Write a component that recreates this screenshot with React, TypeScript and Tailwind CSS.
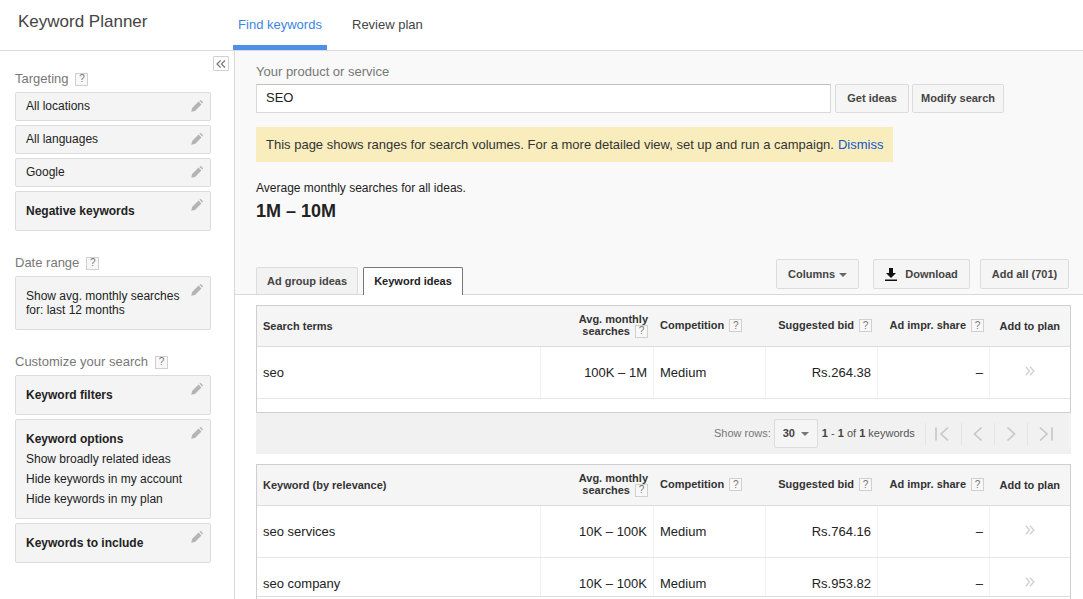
import type { ReactNode } from "react";

function Help() {
  return (
    <span className="inline-flex h-[13px] w-[13px] items-center justify-center border border-[#d0d0d0] bg-[#f8f8f8] text-[10px] font-normal leading-none text-[#777]">?</span>
  );
}

function PencilIcon() {
  return (
    <svg viewBox="0 0 14 14" className="absolute right-[7px] top-[7px] h-[12px] w-[12px]">
      <path d="M0.3 13.7 L1.3 9.3 L8.8 1.8 L12.2 5.2 L4.7 12.7 Z M9.8 0.8 L10.6 0.2 Q11.2 -0.1 11.8 0.3 L13.7 2.2 Q14.1 2.8 13.8 3.4 L13.2 4.2 Z" fill="#b4b4b4" />
    </svg>
  );
}

function Card({ className, children }: { className: string; children: ReactNode }) {
  return (
    <div className={"relative rounded-[2px] border border-[#dcdcdc] bg-[#f4f4f4] pl-[10px] text-[12px] text-[#222] " + className}>
      {children}
      <PencilIcon />
    </div>
  );
}

function SideLabel({ text, className }: { text: string; className: string }) {
  return (
    <div className={"flex items-center gap-[7px] text-[13px] text-[#777] " + className}>
      {text}
      <Help />
    </div>
  );
}

function Btn({ className, children }: { className: string; children: ReactNode }) {
  return (
    <button className={"flex h-[29px] items-center justify-center rounded-[2px] border border-[#dcdcdc] bg-[#f5f5f5] text-[11px] font-bold text-[#444] " + className}>
      {children}
    </button>
  );
}

function TableHead({ title }: { title: string }) {
  return (
    <div className="flex h-[41px] border-b border-[#dcdcdc] bg-[#f5f5f5] text-[11px] font-bold text-[#333]">
      <div className="flex w-[283px] items-center pl-[6px]">{title}</div>
      <div className="flex w-[113px] flex-col items-end justify-center pb-[2px] pr-[5px] leading-[12px]">
        <span>Avg. monthly</span>
        <span className="flex items-center gap-[5px]">searches <Help /></span>
      </div>
      <div className="flex w-[112px] items-center gap-[5px] pl-[7px] pb-[1px]">Competition <Help /></div>
      <div className="flex w-[112px] items-center justify-end gap-[5px] pr-[5px] pb-[1px]">Suggested bid <Help /></div>
      <div className="flex w-[112px] items-center justify-end gap-[5px] pr-[5px] pb-[1px]">Ad impr. share <Help /></div>
      <div className="flex flex-1 items-center justify-end pr-[10px]">Add to plan</div>
    </div>
  );
}

function Row({ term, vol, bid, height }: { term: string; vol: string; bid: string; height: string }) {
  return (
    <div className={"flex overflow-hidden border-b text-[13px] text-[#222] " + height}>
      <div className="flex h-[51px] w-[284px] shrink-0 items-center border-r border-[#f1f1f1] pl-[6px]">{term}</div>
      <div className="flex h-[51px] w-[113px] shrink-0 items-center justify-end border-r border-[#f1f1f1] pr-[6px]">{vol}</div>
      <div className="flex h-[51px] w-[112px] shrink-0 items-center border-r border-[#f1f1f1] pl-[6px]">Medium</div>
      <div className="flex h-[51px] w-[112px] shrink-0 items-center justify-end border-r border-[#f1f1f1] pr-[6px]">{bid}</div>
      <div className="flex h-[51px] w-[112px] shrink-0 items-center justify-end border-r border-[#f1f1f1] pr-[6px]">–</div>
      <div className="flex h-[51px] flex-1 items-center justify-center pb-[3px]">
        <svg viewBox="0 0 10 10" className="h-[10px] w-[10px]" fill="none" stroke="#cfcfcf" strokeWidth="1.3">
          <path d="M0.8 0.8 L4.6 5 L0.8 9.2 M5 0.8 L8.8 5 L5 9.2" />
        </svg>
      </div>
    </div>
  );
}

function PageIcon({ d, w }: { d: string; w: string }) {
  return (
    <div className={"flex h-[22px] items-center justify-center border-l border-[#e4e4e4] " + w}>
      <svg viewBox="0 0 16 16" className="h-[16px] w-[16px]" fill="none" stroke="#c8c8c8" strokeWidth="1.7">
        <path d={d} />
      </svg>
    </div>
  );
}

export default function App() {
  return (
    <div className="flex h-[599px] w-[1083px] flex-col overflow-hidden bg-white font-['Liberation_Sans',Arial,sans-serif]">
      {/* Top bar */}
      <header className="flex h-[51px] shrink-0 border-b border-[#d9d9d9]">
        <div className="w-[233px] pl-[18px] pt-[11px] text-[17px] leading-[22px] text-[#444]">Keyword Planner</div>
        <div className="flex h-[50px] w-[94px] items-start justify-center border-b-[5px] border-[#4d90e5] pt-[15px] text-[13px] text-[#3b86e0]">Find keywords</div>
        <div className="pl-[25px] pt-[15px] text-[13px] text-[#444]">Review plan</div>
      </header>

      <div className="flex min-h-0 flex-1">
        {/* Sidebar */}
        <aside className="relative w-[235px] shrink-0 border-r border-[#d9d9d9] pl-[15px] pr-[23px]">
          <button className="absolute right-[5px] top-[5px] flex h-[15px] w-[16px] items-center justify-center rounded-[1px] border border-[#d0d0d0] bg-white">
            <svg viewBox="0 0 10 8" className="h-[8px] w-[10px]" fill="none" stroke="#777" strokeWidth="1.2">
              <path d="M4.6 0.5 L1 4 L4.6 7.5 M9 0.5 L5.4 4 L9 7.5" />
            </svg>
          </button>
          <SideLabel text="Targeting" className="mt-[20px] h-[16px]" />
          <div className="mt-[5px] flex flex-col gap-[4px]">
            <Card className="flex h-[29px] items-center pb-[1px]">All locations</Card>
            <Card className="flex h-[29px] items-center pb-[1px]">All languages</Card>
            <Card className="flex h-[29px] items-center pb-[1px]">Google</Card>
            <Card className="flex h-[40px] items-center font-bold">Negative keywords</Card>
          </div>
          <SideLabel text="Date range" className="mt-[24px] h-[16px]" />
          <div className="mt-[5px]">
            <Card className="h-[54px] pt-[12px] leading-[14px]">
              Show avg. monthly searches<br />for: last 12 months
            </Card>
          </div>
          <SideLabel text="Customize your search" className="mt-[24px] h-[16px]" />
          <div className="mt-[5px] flex flex-col gap-[4px]">
            <Card className="flex h-[40px] items-center font-bold">Keyword filters</Card>
            <Card className="h-[100px] pt-[9px] leading-[20px]">
              <div className="font-bold">Keyword options</div>
              <div>Show broadly related ideas</div>
              <div>Hide keywords in my account</div>
              <div>Hide keywords in my plan</div>
            </Card>
            <Card className="flex h-[40px] items-center font-bold">Keywords to include</Card>
          </div>
        </aside>

        {/* Main */}
        <main className="flex min-w-0 flex-1 flex-col">
          <section className="h-[244px] shrink-0 border-b border-[#d9d9d9] bg-[#f9f9f9] pl-[21px]">
            <div className="pt-[13px] text-[13px] leading-[15px] text-[#777]">Your product or service</div>
            <div className="mt-[5px] flex">
              <div className="flex h-[29px] w-[575px] items-center border border-[#d9d9d9] border-t-[#c0c0c0] bg-white pb-[1px] pl-[9px] text-[13px] text-[#222]">SEO</div>
              <Btn className="ml-[4px] w-[74px]">Get ideas</Btn>
              <Btn className="ml-[3px] w-[92px]">Modify search</Btn>
            </div>
            <div className="mt-[14px] flex h-[35px] w-[637px] items-center bg-[#f9edbe] pl-[10px] text-[13px] text-[#333]">
              This page shows ranges for search volumes. For a more detailed view, set up and run a campaign.
              <span className="ml-[4px] text-[#15c]">Dismiss</span>
            </div>
            <div className="mt-[19px] text-[12px] leading-[14px] text-[#222]">Average monthly searches for all ideas.</div>
            <div className="mt-[6px] text-[18px] font-bold leading-[21px] text-[#222]">1M – 10M</div>
            <div className="mt-[37px] flex h-[35px] items-end">
              <div className="flex h-[27px] w-[102px] items-center justify-center rounded-t-[2px] border border-b-0 border-[#dcdcdc] bg-[#f2f2f2] pt-[1px] text-[11px] font-bold text-[#444]">Ad group ideas</div>
              <div className="relative z-10 mb-[-1px] ml-[5px] flex h-[28px] w-[100px] items-center justify-center rounded-t-[2px] border border-b-0 border-[#777] bg-white text-[11px] font-bold text-[#222]">Keyword ideas</div>
              <div className="mb-[5px] ml-auto mr-[14px] flex">
                <Btn className="h-[30px] w-[83px] gap-[4px]">
                  Columns
                  <span className="mt-[1px] h-0 w-0 border-x-[4px] border-t-[4px] border-x-transparent border-t-[#666]" />
                </Btn>
                <Btn className="ml-[14px] h-[30px] w-[97px] gap-[8px] text-[#333]">
                  <svg viewBox="0 0 12 13" className="h-[13px] w-[12px]" fill="#111">
                    <path d="M4 0 H8 V5 H11 L6 10 L1 5 H4 Z" />
                    <rect x="0" y="11.5" width="12" height="1.5" />
                  </svg>
                  Download
                </Btn>
                <Btn className="ml-[10px] h-[30px] w-[89px]">Add all (701)</Btn>
              </div>
            </div>
          </section>

          <section className="min-h-0 flex-1 pl-[21px] pr-[13px] pt-[10px]">
            {/* Search terms table */}
            <div className="h-[108px] w-[815px] overflow-hidden border border-[#cfcfcf]">
              <TableHead title="Search terms" />
              <Row term="seo" vol="100K – 1M" bid="Rs.264.38" height="h-[52px] border-[#e6e6e6]" />
            </div>

            {/* Pagination */}
            <div className="flex h-[41px] w-[815px] items-center bg-[#f1f1f1] pl-[458px] text-[11px] text-[#777]">
              Show rows:
              <div className="ml-[3px] flex h-[29px] w-[44px] items-center justify-center gap-[6px] rounded-[2px] border border-[#dcdcdc] bg-[#f5f5f5] font-bold text-[#444]">
                30
                <span className="mt-[1px] h-0 w-0 border-x-[4px] border-t-[4px] border-x-transparent border-t-[#777]" />
              </div>
              <span className="ml-[4px] text-[#555]"><b className="text-[#444]">1</b> - <b className="text-[#444]">1</b> of <b className="text-[#444]">1</b> keywords</span>
              <div className="ml-[10px] flex h-[24px] items-center">
                <PageIcon w="w-[36px] pr-[3px]" d="M2 1.5 V14.5 M14 1.5 L7 8 L14 14.5" />
                <PageIcon w="w-[33px]" d="M11.5 1.5 L4.5 8 L11.5 14.5" />
                <PageIcon w="w-[33px]" d="M4.5 1.5 L11.5 8 L4.5 14.5" />
                <PageIcon w="w-[36px] pl-[1px]" d="M2 1.5 L9 8 L2 14.5 M14 1.5 V14.5" />
              </div>
            </div>

            {/* Keyword table */}
            <div className="mt-[10px] h-[135px] w-[815px] overflow-hidden border border-b-0 border-[#cfcfcf]">
              <TableHead title="Keyword (by relevance)" />
              <Row term="seo services" vol="10K – 100K" bid="Rs.764.16" height="h-[52px] border-[#e6e6e6]" />
              <Row term="seo company" vol="10K – 100K" bid="Rs.953.82" height="h-[39px] border-[#dddddd]" />
            </div>
          </section>
        </main>
      </div>
    </div>
  );
}
